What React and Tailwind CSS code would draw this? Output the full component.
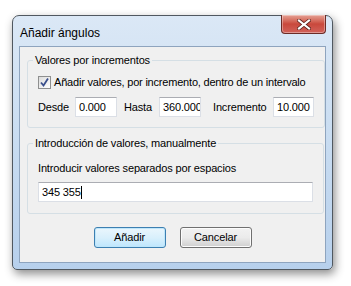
import React from 'react';

const font = { fontFamily: '"Liberation Sans", Arial, sans-serif' };

function TextBox({ value, width, caret }) {
  return (
    <div
      className={`${width} h-[20px] bg-white border border-[#dbdfe6] border-t-[#abadb3] flex items-center px-[3px] text-[11px] text-black overflow-hidden whitespace-nowrap`}
    >
      <span>{value}</span>
      {caret && <span className="inline-block w-[1px] h-[13px] bg-black" />}
    </div>
  );
}

function Button({ label, primary }) {
  return (
    <div
      className={`w-[72px] h-[21px] rounded-[3px] border flex items-center justify-center text-[11px] text-black ${
        primary
          ? 'border-[#3c7fb1] shadow-[inset_0_0_0_1px_#bfe6fa] bg-gradient-to-b from-[#eaf6fd] via-[#d9f0fc] to-[#bee6fd]'
          : 'border-[#707070] shadow-[inset_0_0_0_1px_#fcfcfc] bg-gradient-to-b from-[#f2f2f2] via-[#ebebeb] to-[#cfcfcf]'
      }`}
    >
      {label}
    </div>
  );
}

export default function App() {
  return (
    <div className="w-[351px] h-[286px] bg-white pt-[15px] pl-[12px]" style={font}>
      <div className="w-[321px] h-[255px] rounded-t-[7px] rounded-b-[5px] border border-[#505860] bg-gradient-to-b from-[#dbe8f6] via-[#c8dcf1] to-[#b7d0ec] shadow-[2px_4px_10px_rgba(0,0,0,0.45)] flex flex-col px-[6px] pb-[6px]">
        {/* Title bar */}
        <div className="h-[30px] flex items-start justify-between">
          <span className="pt-[8px] pl-[1px] text-[12px] text-black">Añadir ángulos</span>
          <div className="mt-[-1px] w-[45px] h-[19px] rounded-b-[4px] border border-[#6b2b26] border-t-0 bg-gradient-to-b from-[#e4a195] via-[#c9483c] to-[#d1625a] shadow-[inset_0_0_0_1px_rgba(255,255,255,0.35)] flex items-center justify-center">
            <svg width="14" height="11" viewBox="0 0 14 11">
              <path d="M2 1.5 L12 9.5 M12 1.5 L2 9.5" stroke="#5a1f1a" strokeWidth="3.6" strokeLinecap="square" />
              <path d="M2 1.5 L12 9.5 M12 1.5 L2 9.5" stroke="#ffffff" strokeWidth="2.2" strokeLinecap="square" />
            </svg>
          </div>
        </div>

        {/* Client area */}
        <div className="flex-1 bg-[#f0f0f0] border border-[#8ea4be] flex flex-col px-[7px] pt-[6px] text-[11px] tracking-[-0.15px] text-black">
          <fieldset className="h-[75px] border border-[#d5dfe5] rounded-[3px] px-[10px]">
            <legend className="px-[2px] ml-[-5px] leading-[14px]">Valores por incrementos</legend>
            <div className="flex items-center gap-[3px] mt-[8px] h-[14px] whitespace-nowrap">
              <div className="w-[13px] h-[13px] border border-[#8e8f8f] bg-gradient-to-br from-[#dcdcdc] to-[#ffffff] flex items-center justify-center">
                <svg width="11" height="11" viewBox="0 0 11 11">
                  <path d="M2 5.5 L4.5 8.5 L9 1.5" stroke="#3a4f8c" strokeWidth="1.8" fill="none" />
                </svg>
              </div>
              <span className="tracking-[-0.2px]">Añadir valores, por incremento, dentro de un intervalo</span>
            </div>
            <div className="flex items-center mt-[8px]">
              <span className="w-[37px]">Desde</span>
              <TextBox value="0.000" width="w-[42px]" />
              <span className="ml-[7px] w-[35px]">Hasta</span>
              <TextBox value="360.000" width="w-[42px]" />
              <span className="ml-[12px] w-[60px]">Incremento</span>
              <TextBox value="10.000" width="w-[41px]" />
            </div>
          </fieldset>

          <fieldset className="mt-[8px] h-[78px] border border-[#d5dfe5] rounded-[3px] px-[10px]">
            <legend className="px-[2px] ml-[-5px] leading-[14px]">Introducción de valores, manualmente</legend>
            <div className="mt-[11px] leading-[14px]">Introducir valores separados por espacios</div>
            <div className="mt-[7px]">
              <TextBox value="345 355" width="w-[275px]" caret />
            </div>
          </fieldset>

          <div className="flex justify-center gap-[14px] mt-[13px]">
            <Button label="Añadir" primary />
            <Button label="Cancelar" />
          </div>
        </div>
      </div>
    </div>
  );
}
